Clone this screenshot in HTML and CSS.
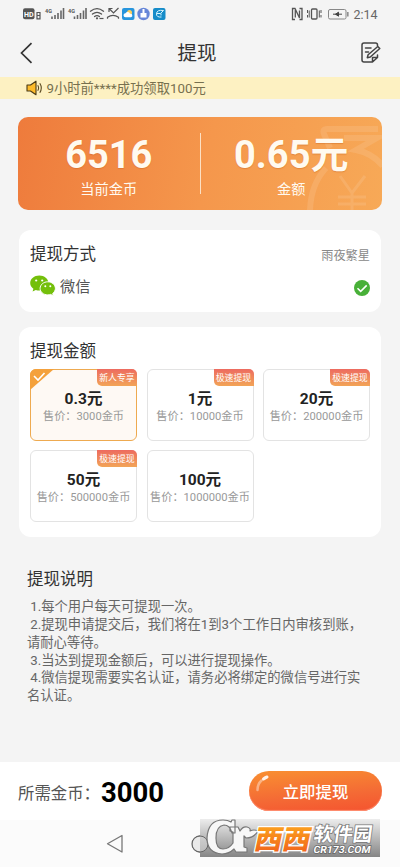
FILE: index.html
```html
<!DOCTYPE html>
<html lang="zh-CN">
<head>
<meta charset="utf-8">
<title>提现</title>
<link rel="stylesheet" href="styles.css">
</head>
<body>
<div class="screen">
  <div class="status">
    <svg class="status-left" width="145" height="16" viewBox="0 0 145 16">
      <rect x="0" y="2.2" width="11.5" height="11" rx="2" fill="#555"/>
      <text x="1" y="10.5" class="hd" textLength="9.500" lengthAdjust="spacingAndGlyphs">HD</text>
      <path d="M14 6.500h3v6.300h-3zM14 9.500h3" fill="none" stroke="#555" stroke-width="1.200"/>
      <text x="22" y="6.500" class="net">4G</text>
      <path d="M29.500 13v-2.500M32.500 13V9M35.500 13V7M38.500 13V4.500M41 13V2" transform="translate(-.5 0)" stroke="#666" stroke-width="1.600"/>
      <text x="45" y="6.500" class="net">4G</text>
      <path d="M52 13v-2.500M55 13V9M58 13V7M61 13V4.500M63.500 13V2" transform="translate(-.5 0)" stroke="#666" stroke-width="1.600"/>
      <g fill="none" stroke="#555" stroke-width="1.300" stroke-linecap="round"><path d="M67.500 5.200q6.500-5 13 0M69.500 8q4.500-3.400 9 0M71.600 10.500q2.400-1.800 4.800 0"/></g>
      <circle cx="74" cy="12.300" r="1.100" fill="#555"/><path d="M76.500 12.500h4" stroke="#555" stroke-width="1.200"/>
      <path d="M84.500 12.800v-1.500q5.500-4 11 0v1.500M86 2.500l4.500 4.500 5-5M86 6V2.500h3.500" fill="none" stroke="#555" stroke-width="1.200"/>
      <rect x="99" y="2" width="12.500" height="12" rx="2" fill="#2795dd"/>
      <circle cx="106.500" cy="6.500" r="2.500" fill="#ffd05a"/><path d="M102.500 11.300a2 2 0 0 1 0-4 2.500 2.500 0 0 1 4.500.5 1.800 1.800 0 0 1 1 3.500z" fill="#fff"/>
      <circle cx="120.500" cy="8" r="6.200" fill="#6686d8"/><path d="M119.500 3h2v4h2v4.500h-6V7h2z" fill="#fff"/>
      <rect x="130" y="2" width="12.500" height="12" rx="2" fill="#168cc9"/><path d="M140.500 4.500q-7-1-7 3.500 0 3.500 5 3M134 7.500h3.500l3-3M138 7.500v2" stroke="#d6f5ff" fill="none"/>
    </svg>
    <svg class="status-right" width="60" height="16" viewBox="0 0 60 16">
      <g fill="none" stroke="#555" stroke-width="1.300">
        <path d="M4 13.500H1.500v-11H4l4.500 9.500V4.500M4.300 4v7.500M8.500 13.500H11v-11H8.500"/>
        <rect x="20.500" y="3" width="5.500" height="10" rx="1"/><path d="M18.200 4.500v7M28.300 4.500v7M16.500 4v3M16.500 9v2.500M30 4v3M30 9v2.500" stroke-width="1"/>
      </g>
      <rect x="37.500" y="3.500" width="17.500" height="9.500" rx="1.500" fill="none" stroke="#888" stroke-width="1"/><rect x="56.200" y="6" width="1.300" height="4.500" fill="#777"/>
      <path d="M42 8.200h9M44.500 8.200l3-2v4z" stroke="#444" fill="#444"/>
    </svg>
    <span class="time">2:14</span>
  </div>

  <header class="header">
    <svg width="14" height="22" viewBox="0 0 14 22"><path d="M11.500 1.200L1.500 11l10 9.800" fill="none" stroke="#333" stroke-width="1.700"/></svg>
    <h1>提现</h1>
    <svg width="20" height="22" viewBox="0 0 20 22"><g fill="none" stroke="#444" stroke-width="1.500" stroke-linejoin="round" stroke-linecap="round"><path d="M16.500 4V3q0-2-2-2H3Q1 1 1 3v15q0 2 2 2h8.500l5-4.500V13M11.500 20v-4.500h5"/><path d="M4.500 6h5.500M4.500 10h3"/><path d="M16.800 4.500l2 2-9.500 8.500-3 .7.800-3z" fill="#f4f4f4"/></g></svg>
  </header>

  <div class="notice">
    <svg width="17" height="16" viewBox="0 0 17 16"><path d="M1 5h3.500L10 1.200v13.600L4.500 11H1z" fill="#fdbb2b" stroke="#4b3b16" stroke-width="1.100" stroke-linejoin="round"/><path d="M11.700 5.200q1.800 2.800 0 5.600M13.800 3.200q3 4.800 0 9.600" fill="none" stroke="#5b4a22" stroke-width="1.100"/></svg>
    <span>9小时前****成功领取100元</span>
  </div>

  <section class="balance">
    <svg class="coin" width="80" height="93" viewBox="0 0 80 93"><g fill="none" stroke="#fff" stroke-opacity=".11"><path d="M76 12H25q-5 0-3 5l6 14M42 21h33L54 33q16 3 27 16M8 93q1-26 16-42" stroke-width="6"/><path d="M38 59l12 17 13-17M50 76v17M36 80h28M36 87h28" stroke-width="3"/></g></svg>
    <div class="balance-item"><strong>6516</strong><span>当前金币</span></div>
    <div class="divider"></div>
    <div class="balance-item"><strong>0.65元</strong><span>金额</span></div>
  </section>

  <section class="card method">
    <div class="row"><h2>提现方式</h2><span class="user">雨夜繁星</span></div>
    <div class="row pay">
      <svg width="26" height="22" viewBox="0 0 26 22"><path d="M9.300.5C4.200.5.200 3.900.200 8c0 2.300 1.200 4.300 3.200 5.700l-.8 2.900 3.200-1.700c1.100.4 2.300.5 3.500.5 5 0 9.100-3.300 9.100-7.400S14.400.5 9.300.5z" fill="#74bf0b"/><path d="M17.800 6.800c-4.300 0-7.700 3-7.700 6.600s3.400 6.500 7.700 6.500c1 0 2-.2 2.900-.5l2.600 1.500-.6-2.500c1.600-1.200 2.700-3 2.700-5 0-3.600-3.400-6.600-7.600-6.600z" fill="#74bf0b" stroke="#fff" stroke-width="1"/><g fill="#fff"><circle cx="6.200" cy="5.500" r="1.100"/><circle cx="12.200" cy="5.500" r="1.100"/><circle cx="15.300" cy="11.300" r="1"/><circle cx="20.300" cy="11.300" r="1"/></g></svg>
      <span class="pay-name">微信</span>
      <svg class="tick" width="16" height="16" viewBox="0 0 16 16"><circle cx="8" cy="8" r="8" fill="#48b038"/><path d="M3.500 8.200l3.200 3.200 6-6" fill="none" stroke="#fff" stroke-width="1.500"/></svg>
    </div>
  </section>

  <section class="card amounts">
    <h2>提现金额</h2>
    <div class="grid">
      <div class="option selected"><svg class="corner" width="24" height="21" viewBox="0 0 24 21"><path d="M0 0h24L0 21z" fill="#f4a13c"/><path d="M4 7l4 4 6.500-7" fill="none" stroke="#fff" stroke-width="1.600"/></svg><em>新人专享</em><b>0.3元</b><span>售价：3000金币</span></div>
      <div class="option"><em>极速提现</em><b>1元</b><span>售价：10000金币</span></div>
      <div class="option"><em>极速提现</em><b>20元</b><span>售价：200000金币</span></div>
      <div class="option"><em>极速提现</em><b>50元</b><span>售价：500000金币</span></div>
      <div class="option"><b>100元</b><span>售价：1000000金币</span></div>
    </div>
  </section>

  <section class="rules">
    <h2>提现说明</h2>
    <p>&nbsp;1.每个用户每天可提现一次。</p>
    <p>&nbsp;2.提现申请提交后，我们将在1到3个工作日内审核到账，<br>请耐心等待。</p>
    <p>&nbsp;3.当达到提现金额后，可以进行提现操作。</p>
    <p>&nbsp;4.微信提现需要实名认证，请务必将绑定的微信号进行实<br>名认证。</p>
  </section>

  <footer class="bar">
    <span class="need">所需金币：</span><strong>3000</strong>
    <button class="submit"><svg class="shine" width="14" height="18" viewBox="0 0 14 18"><path d="M1.500 15q0-6 4-9.500" fill="none" stroke="#fff" stroke-opacity=".4" stroke-width="2.500" stroke-linecap="round"/><path d="M7.500 4q2-1.500 3.500-2" stroke="#fff" stroke-opacity=".9" stroke-width="3" stroke-linecap="round" fill="none"/></svg>立即提现</button>
  </footer>

  <nav class="system">
    <svg width="18" height="20" viewBox="0 0 18 20"><path d="M16 1.500v16.500L1.500 9.800z" fill="none" stroke="#777" stroke-width="1.300" stroke-linejoin="round"/></svg>
    <svg width="18" height="18" viewBox="0 0 18 18"><circle cx="9" cy="9" r="8" fill="none" stroke="#777" stroke-width="1.300"/></svg>
  </nav>

  <svg class="mark" width="192" height="44" viewBox="0 0 192 44">
    <defs>
      <linearGradient id="shade" x1="0" y1="0" x2="0" y2="1"><stop offset="0" stop-color="#ededed"/><stop offset="1" stop-color="#858585"/></linearGradient>
      <linearGradient id="orange" x1="0" y1="0" x2="0" y2="1"><stop offset="0" stop-color="#ffb51e"/><stop offset="1" stop-color="#ef5a1b"/></linearGradient>
    </defs>
    <rect x="8" y="5" width="180" height="38" fill="url(#shade)"/>
    <circle cx="8" cy="30" r="8" fill="#ddd" fill-opacity=".55" stroke="#666"/>
    <path d="M43 6v13h-3q-2-8-8-8-8 1-8 13 0 11 7 11 6 0 10-6V18l-3-1v-4h8l2 4q3-5 7-4 4 1 3 4 4-2 8 0-4 7-12 7l-2-2v11l3 1v4H44l-2-3q-5 5-12 5-15-1-15-16Q16 6 31 6q5 0 8 2l1-2z" fill="#f7f7f7" stroke="#777" stroke-width="1.200" stroke-linejoin="round"/>
    <g transform="translate(61 35) skewX(-12)"><text class="xixi" x="0" y="0" textLength="56" lengthAdjust="spacingAndGlyphs">西西</text></g>
    <g transform="translate(121 27) skewX(-8)"><text class="soft" x="0" y="0">软件园</text></g>
    <g transform="translate(121 39) skewX(-10)"><text class="site" x="0" y="0" textLength="57" lengthAdjust="spacingAndGlyphs">CR173.COM</text></g>
  </svg>
</div>
</body>
</html>
```
FILE: styles.css
```css
* { box-sizing: border-box; }
body {
  margin: 0;
  background: #f4f4f4;
  color: #333;
  font-family: Roboto, "Noto Sans CJK SC", sans-serif;
}
h1, h2, p { margin: 0; font-weight: 400; }
.screen {
  position: relative;
  display: flex;
  flex-direction: column;
  width: 400px;
  height: 867px;
  overflow: hidden;
}
.status {
  display: flex;
  align-items: center;
  height: 28px;
  padding: 0 22.500px 0 23px;
}
.status-right { margin-left: auto; }
.time { margin-left: 2.500px; font-size: 12.500px; line-height: 28px; padding-top: 1px; color: #666; }
.hd { font: bold 7px Roboto, sans-serif; fill: #fff; }
.net { font: bold 5.500px Roboto, sans-serif; fill: #555; }
.header {
  display: flex;
  align-items: center;
  justify-content: space-between;
  height: 49px;
  padding: 0 19px 0 20px;
}
.header h1 { margin-right: 1px; padding-top: 3px; font-size: 19.500px; line-height: 46px; }
.notice {
  display: flex;
  align-items: center;
  gap: 3.500px;
  height: 22px;
  padding-left: 26px;
  background: #fdf1c2;
  color: #77704f;
  font-size: 13.300px;
  line-height: 22px;
}
.notice span { padding-top: 1px; }
.balance {
  position: relative;
  display: flex;
  align-items: center;
  height: 93px;
  margin: 18px 18px 0;
  border-radius: 10px;
  overflow: hidden;
  background: linear-gradient(100deg, #ee7b3c, #f5974c 52%, #f7a957);
  color: #fffaf0;
}
.coin { position: absolute; right: 0; top: 0; }
.balance-item {
  position: relative;
  display: flex;
  flex: 1;
  flex-direction: column;
  align-items: center;
  padding-top: 6px;
}
.balance-item strong { font-size: 38px; line-height: 42px; text-shadow: 0 1px 1px rgba(190, 90, 20, .35); }
.balance-item span { font-size: 14.200px; line-height: 20px; margin-top: 3px; }
.divider { width: 1px; height: 61px; background: #fce0c4; }
.card { margin: 20px 19px 0; padding: 0 11px; border-radius: 12px; background: #fff; }
.card h2, .rules h2 { font-size: 16.500px; line-height: 24px; }
.method { height: 82px; padding-top: 13px; }
.row { display: flex; align-items: center; }
.user { margin-left: auto; font-size: 12.200px; color: #888; }
.pay { height: 22px; margin-top: 8px; }
.pay-name { margin-left: 4px; padding-top: 2px; font-size: 15.200px; line-height: 22px; color: #555; }
.tick { margin: 4px 0 0 auto; }
.amounts { height: 210px; margin-top: 15px; padding-top: 13px; }
.grid {
  display: grid;
  grid-template-columns: repeat(3, 107px);
  grid-auto-rows: 72px;
  gap: 9px 9.500px;
  margin-top: 5px;
}
.option {
  position: relative;
  display: flex;
  flex-direction: column;
  align-items: center;
  padding-top: 19px;
  border: 1px solid #e3e3e3;
  border-radius: 6px;
  white-space: nowrap;
}
.option b { font-size: 15.500px; line-height: 20px; color: #222; }
.option span { font-size: 11.200px; line-height: 16px; color: #999; }
.option em {
  position: absolute;
  top: -1px;
  right: -1px;
  width: 40px;
  height: 17px;
  border-radius: 0 5px 0 5px;
  background: linear-gradient(#ed6b60, #f2a457);
  color: #fff;
  font-size: 8.900px;
  font-style: normal;
  line-height: 18px;
  text-align: center;
}
.selected { border: 1.500px solid #eeaa50; background: #fef9f4; }
.corner { position: absolute; left: -1px; top: -1px; border-top-left-radius: 6px; }
.rules { margin: 31px 27px 0; color: #666; font-size: 13.300px; line-height: 17.850px; white-space: nowrap; }
.rules h2 { margin-bottom: 6px; color: #333; }
.bar {
  display: flex;
  align-items: center;
  height: 58px;
  margin-top: auto;
  padding: 0 18px;
  background: #fff;
}
.need { width: 83px; padding-top: 1px; font-size: 16.400px; color: #555; white-space: nowrap; }
.bar strong { padding-top: 3px; font-size: 27.500px; line-height: 55px; color: #000; }
.submit {
  position: relative;
  width: 133px;
  height: 40px;
  margin-left: auto;
  padding: 3px 0 0 0;
  border: 0;
  border-radius: 20px;
  background: linear-gradient(175deg, #f99031, #f46a35 60%, #f5532f);
  box-shadow: inset 0 -1px 1px #ff9275;
  color: #fff;
  font: 500 16.400px/37px Roboto, "Noto Sans CJK SC", sans-serif;
}
.shine { position: absolute; left: 7px; top: 4px; }
.system {
  display: flex;
  align-items: center;
  flex: none;
  gap: 68px;
  height: 47px;
  padding-left: 106px;
  background: #fbfbfb;
}
.system svg { flex: none; }
.system svg + svg { margin-left: -1px; }
.mark { position: absolute; left: 192px; top: 814px; }
.xixi { font: 900 27px "Noto Sans CJK SC", sans-serif; fill: url(#orange); stroke: #fff; stroke-width: 2.500px; paint-order: stroke; }
.soft { font: 700 19.500px "Noto Sans CJK SC", sans-serif; fill: #fff; stroke: #777; stroke-width: 1.500px; paint-order: stroke; }
.site { font: bold 10px Roboto, sans-serif; fill: #fff; stroke: #666; stroke-width: 1.500px; paint-order: stroke; }
```
